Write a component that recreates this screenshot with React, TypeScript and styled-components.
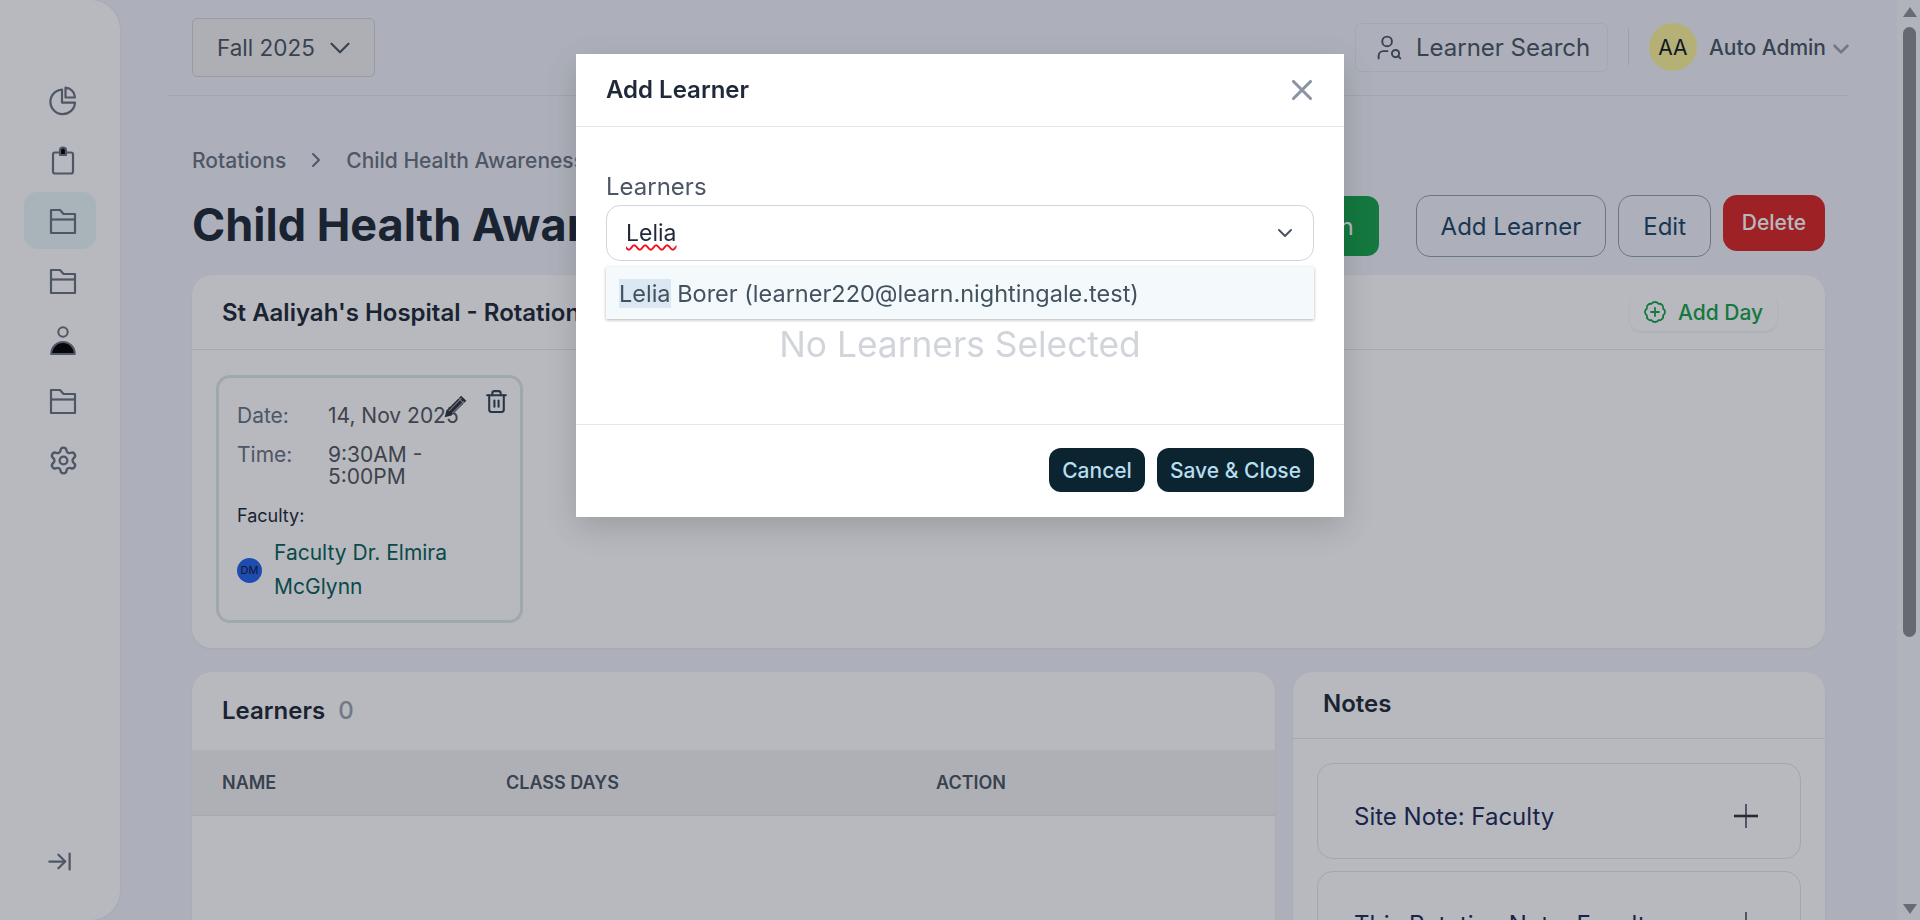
import React from "react";
import styled, { createGlobalStyle } from "styled-components";
import { ArrowRightToLine, BadgePlus, ChevronDown, ChevronRight, Settings, Trash2, UserSearch, X } from "lucide-react";

const GlobalStyle = createGlobalStyle`
  html, body {
    margin: 0;
    padding: 0;
    height: 100%;
    overflow: hidden;
  }
  body {
    font-family: Inter, "Liberation Sans", sans-serif;
    background: #f1f3f9;
    color: #1f2937;
  }
  * {
    box-sizing: border-box;
  }
`;

const Shell = styled.div`
  display: flex;
  width: 1920px;
  height: 920px;
  overflow: hidden;
  background: #f1f3f9;
`;

const Sidebar = styled.aside`
  flex: 0 0 120px;
  display: flex;
  flex-direction: column;
  align-items: flex-start;
  padding: 72px 0 0 24px;
  background: #ffffff;
  border-radius: 0 30px 30px 0;
  box-shadow: 0 0 4px rgba(0, 0, 0, 0.06);
`;

const NavItem = styled.div<{ $active?: boolean }>`
  width: 72px;
  height: 57px;
  margin-bottom: 3px;
  display: flex;
  align-items: center;
  justify-content: center;
  padding-left: 6px;
  color: #6b7280;
  border-radius: 14px;
  background: ${(p) => (p.$active ? "#eaf6fa" : "transparent")};
`;

const CollapseBtn = styled.div`
  margin-top: auto;
  margin-bottom: 45px;
  margin-left: 22px;
  color: #6b7280;
  display: flex;
`;

const Main = styled.main`
  flex: 1;
  min-width: 0;
  padding: 0 48px;
  height: 920px;
  overflow: hidden;
`;

const TopBar = styled.header`
  height: 96px;
  display: flex;
  align-items: center;
  justify-content: space-between;
  padding-left: 24px;
  padding-bottom: 1px;
  border-bottom: 1px solid #e2e5ec;
`;

const TermSelect = styled.div`
  width: 183px;
  height: 59px;
  display: flex;
  align-items: center;
  gap: 8px;
  padding-left: 24px;
  font-size: 22.5px;
  color: #4b5563;
  background: #f3f1f2;
  border: 1px solid #d1d5db;
  border-radius: 5px;
  margin-top: 1px;
`;

const TopRight = styled.div`
  display: flex;
  align-items: center;
`;

const SearchBtn = styled.div`
  width: 253px;
  height: 49px;
  display: flex;
  align-items: center;
  gap: 12px;
  padding-left: 19px;
  font-size: 24px;
  color: #4b5563;
  border: 1px solid #e5e7eb;
  border-radius: 6px;
`;

const VDivider = styled.span`
  width: 1px;
  height: 36px;
  margin: 0 20px;
  background: #d9dce3;
`;

const Avatar = styled.div`
  width: 48px;
  height: 48px;
  border-radius: 50%;
  display: flex;
  align-items: center;
  justify-content: center;
  font-size: 21px;
  color: #111827;
  background: #fdf298;
`;

const UserName = styled.span`
  margin-left: 12px;
  font-size: 21px;
  font-weight: 500;
  color: #4b5563;
`;

const UserCaret = styled.span`
  display: flex;
  margin: 4px -5px 0 2px;
  color: #9ca3af;
`;

const Content = styled.div`
  padding: 0 24px;
`;

const Breadcrumbs = styled.nav`
  display: flex;
  align-items: center;
  height: 28px;
  margin-top: 50px;
  font-size: 21px;
  font-weight: 500;
  color: #6b7280;
`;

const CrumbSep = styled.span`
  display: flex;
  margin: 0 18px;
  color: #6b7280;
`;

const TitleRow = styled.div`
  display: flex;
  align-items: flex-start;
  justify-content: space-between;
  margin-top: 21px;
`;

const PageTitle = styled.h1`
  margin: 0;
  font-size: 45px;
  line-height: 60px;
  font-weight: 700;
  color: #1f2937;
  white-space: nowrap;
`;

const Actions = styled.div`
  display: flex;
  align-items: flex-start;
  gap: 12px;
`;

const OutlineBtn = styled.div`
  height: 62px;
  padding: 0 24px;
  display: flex;
  align-items: center;
  font-size: 24px;
  color: #1e4566;
  border: 1px solid #8fa3a8;
  border-radius: 14px;
  white-space: nowrap;
`;

const GreenBtn = styled.div`
  height: 60px;
  margin: 1px 25px 0 0;
  padding: 0 25px;
  display: flex;
  align-items: center;
  font-size: 24px;
  color: #ffffff;
  background: #16a34a;
  border-radius: 12px;
  white-space: nowrap;
`;

const DeleteBtn = styled.div`
  width: 102px;
  height: 56px;
  display: flex;
  align-items: center;
  justify-content: center;
  padding-bottom: 2px;
  font-size: 21px;
  font-weight: 500;
  color: #ffffff;
  background: #dc2626;
  border-radius: 14px;
`;

const Card = styled.section`
  background: #ffffff;
  border-radius: 20px;
  box-shadow: 0 1px 3px rgba(0, 0, 0, 0.06);
  overflow: hidden;
`;

const RotationCard = styled(Card)`
  height: 373px;
  margin-top: 18px;
`;

const CardHeader = styled.div`
  height: 75px;
  display: flex;
  align-items: center;
  justify-content: space-between;
  padding: 0 48px 0 30px;
  border-bottom: 1px solid #e5e7eb;
`;

const CardTitle = styled.h2`
  margin: 0;
  font-size: 24px;
  font-weight: 600;
  color: #1f2937;
  white-space: nowrap;
`;

const AddDayBtn = styled.div`
  width: 147px;
  height: 37px;
  display: flex;
  align-items: center;
  gap: 11px;
  padding-left: 13px;
  font-size: 21px;
  font-weight: 500;
  color: #16a34a;
  white-space: nowrap;
  border-radius: 12px;
  box-shadow: 0 1px 3px rgba(0, 0, 0, 0.08);
`;

const DayCard = styled.div`
  position: relative;
  width: 307px;
  height: 248px;
  margin: 25px 0 0 24px;
  padding: 27px 18px 0;
  border: 3px solid #dde7e8;
  border-radius: 14px;
`;

const InfoRow = styled.div`
  display: grid;
  grid-template-columns: 91px 140px;
  font-size: 21px;
  line-height: 22px;
  margin-bottom: 17px;
  color: #6b7280;
`;

const InfoValue = styled.span`
  color: #52565e;
`;

const FacultyLabel = styled.div`
  margin-top: 17px;
  font-size: 18px;
  line-height: 22px;
  color: #1f2937;
`;

const FacultyRow = styled.div`
  display: flex;
  align-items: center;
  gap: 12px;
  margin-top: 9px;
  font-size: 21px;
  line-height: 34px;
  color: #096059;
`;

const FacultyAvatar = styled.span`
  flex: 0 0 25px;
  height: 25px;
  border-radius: 50%;
  display: flex;
  align-items: center;
  justify-content: center;
  font-size: 11px;
  color: #111827;
  background: #2563eb;
`;

const PencilIcon = styled.span`
  position: absolute;
  top: 16px;
  left: 224px;
  display: flex;
`;

const TrashIcon = styled.span`
  position: absolute;
  top: 11px;
  left: 265px;
  display: flex;
  color: #374151;
`;

const BottomRow = styled.div`
  display: grid;
  grid-template-columns: 1083px 532px;
  gap: 18px;
  margin-top: 24px;
`;

const LearnersCard = styled(Card)`
  height: 300px;
  border-radius: 20px 20px 0 0;
`;

const LearnersHead = styled.div`
  height: 78px;
  display: flex;
  align-items: center;
  gap: 13px;
  padding: 0 0 1px 30px;
`;

const CountLabel = styled.span`
  font-size: 24px;
  font-weight: 500;
  color: #9ca3af;
`;

const TableHead = styled.div`
  height: 66px;
  display: grid;
  grid-template-columns: 284px 430px 1fr;
  align-items: center;
  padding-left: 30px;
  font-size: 18px;
  font-weight: 600;
  color: #4b5563;
  text-transform: uppercase;
  background: #f4f3f2;
  border-bottom: 1px solid #e9e9e9;
`;

const NotesCard = styled(Card)`
  height: 300px;
  border-radius: 20px 20px 0 0;
`;

const NotesHead = styled.div`
  height: 67px;
  display: flex;
  align-items: center;
  padding: 0 30px 3px;
  border-bottom: 1px solid #e5e7eb;
`;

const NotesList = styled.div`
  display: flex;
  flex-direction: column;
  gap: 12px;
  padding: 24px 24px 0;
`;

const NoteItem = styled.div`
  height: 96px;
  flex-shrink: 0;
  display: flex;
  align-items: center;
  justify-content: space-between;
  padding: 10px 42px 0 36px;
  font-size: 24px;
  color: #1e2a5a;
  white-space: nowrap;
  border: 1px solid #e2e4ee;
  border-radius: 16px;
`;

const ScrollRail = styled.div`
  flex: 0 0 23px;
  height: 920px;
  display: flex;
  flex-direction: column;
  align-items: center;
  background: #f5f6fa;
  padding-left: 2px;
`;

const RailArrow = styled.span<{ $down?: boolean }>`
  width: 0;
  height: 0;
  margin-top: ${(p) => (p.$down ? "auto" : "7px")};
  margin-bottom: ${(p) => (p.$down ? "6px" : "0")};
  border-left: 7px solid transparent;
  border-right: 7px solid transparent;
  border-${(p) => (p.$down ? "top" : "bottom")}: 10px solid #8f9096;
`;

const RailThumb = styled.div`
  width: 13px;
  height: 610px;
  margin-top: 10px;
  border-radius: 7px;
  background: #8c8d93;
`;

const Overlay = styled.div`
  position: fixed;
  inset: 0;
  display: flex;
  justify-content: center;
  align-items: flex-start;
  padding-top: 54px;
  background: rgba(17, 24, 39, 0.3);
`;

const Modal = styled.div`
  width: 768px;
  height: 463px;
  display: flex;
  flex-direction: column;
  background: #ffffff;
  box-shadow: 0 10px 30px rgba(0, 0, 0, 0.16);
`;

const ModalHeader = styled.div`
  height: 73px;
  flex-shrink: 0;
  display: flex;
  align-items: center;
  justify-content: space-between;
  padding: 0 25px 1px 30px;
  border-bottom: 1px solid #e5e7eb;
`;

const ModalTitle = styled.h3`
  margin: 0;
  font-size: 24px;
  font-weight: 600;
  color: #1f2937;
`;

const CloseBtn = styled.span`
  display: flex;
  color: #8a94a3;
`;

const ModalBody = styled.div`
  position: relative;
  flex: 1;
  padding: 45px 30px 0;
`;

const FieldLabel = styled.label`
  display: block;
  font-size: 24px;
  line-height: 30px;
  color: #4b5563;
`;

const SelectBox = styled.div`
  height: 56px;
  margin-top: 3px;
  display: flex;
  align-items: center;
  justify-content: space-between;
  padding: 0 16px 0 19px;
  border: 1px solid #d1d5db;
  border-radius: 14px;
  color: #4b5563;
`;

const TypedText = styled.span`
  font-size: 23px;
  color: #1f2937;
  text-decoration: underline wavy #f0101e 1.6px;
  text-underline-offset: 3px;
`;

const Menu = styled.div`
  position: absolute;
  top: 140px;
  left: 30px;
  right: 30px;
  height: 52px;
  display: flex;
  align-items: center;
  padding-left: 13px;
  font-size: 23.5px;
  color: #43525f;
  background: #f4f9fc;
  box-shadow: 0 1px 3px rgba(0, 0, 0, 0.3);
`;

const Match = styled.mark`
  color: inherit;
  background: #dbe7f3;
`;

const EmptyText = styled.div`
  margin-top: 62px;
  text-align: center;
  font-size: 35.3px;
  line-height: 44px;
  color: #d1d5db;
`;

const ModalFooter = styled.div`
  height: 93px;
  flex-shrink: 0;
  display: flex;
  justify-content: flex-end;
  gap: 12px;
  padding: 23px 30px 0;
  border-top: 1px solid #e5e7eb;
`;

const DarkBtn = styled.div`
  height: 44px;
  padding: 0 13px;
  display: flex;
  align-items: center;
  font-size: 21px;
  font-weight: 500;
  color: #b5deef;
  background: #0c2330;
  border-radius: 12px;
`;

const PieIcon = () => (
  <svg width="30" height="30" viewBox="0 0 30 30" fill="none" stroke="currentColor" strokeWidth="2.2" strokeLinejoin="round">
    <path d="M14 3.6a12.3 12.3 0 1 0 13 13H14z" />
    <path d="M17.5 1.7a10 10 0 0 1 9.5 9.8h-9.5z" />
  </svg>
);

const ClipIcon = () => (
  <svg width="30" height="30" viewBox="0 0 30 30" fill="none" stroke="currentColor" strokeWidth="2.2" strokeLinejoin="round">
    <rect x="5" y="6.5" width="20" height="21" rx="2" />
    <path d="M12 9V4.5a3 3 0 0 1 6 0V9z" fill="#000" />
  </svg>
);

const FolderIcon = () => (
  <svg width="28" height="28" viewBox="0 0 28 28" fill="none" stroke="currentColor" strokeWidth="2.2" strokeLinejoin="round">
    <path d="M2 3h9l3.5 4H26v19H2z" />
    <path d="M2 12.5h24" />
  </svg>
);

const PersonIcon = () => (
  <svg width="26" height="29" viewBox="0 0 26 29" fill="none" stroke="currentColor" strokeWidth="2">
    <circle cx="13" cy="6" r="4.7" />
    <path d="M1.2 28a11.8 12 0 0 1 23.6 0z" fill="#000" strokeLinejoin="round" />
  </svg>
);

const PencilGlyph = () => (
  <svg width="25" height="25" viewBox="0 0 22 22" fill="none">
    <path d="M16 1.5l4.5 4.5L7.5 19 1.5 20.5 3 14.5z" fill="#2f343c" />
    <path d="M5 15L16.5 3.5M8 17L18.5 6.5M13.5 3.5L18.5 8.5" stroke="#ffffff" strokeOpacity="0.55" strokeWidth="0.9" />
  </svg>
);

const NotePlus = () => (
  <svg width="24" height="24" viewBox="0 0 24 24" fill="none">
    <path d="M12 0v24" stroke="#6b7280" strokeWidth="2" />
    <path d="M0 12h24" stroke="#2f343c" strokeWidth="2.6" />
  </svg>
);

export default function App() {
  return (
    <>
      <GlobalStyle />
      <Shell>
        <Sidebar>
          <NavItem><PieIcon /></NavItem>
          <NavItem><ClipIcon /></NavItem>
          <NavItem $active><FolderIcon /></NavItem>
          <NavItem><FolderIcon /></NavItem>
          <NavItem><PersonIcon /></NavItem>
          <NavItem><FolderIcon /></NavItem>
          <NavItem><Settings size={31} strokeWidth={1.8} /></NavItem>
          <CollapseBtn><ArrowRightToLine size={27} strokeWidth={2} /></CollapseBtn>
        </Sidebar>

        <Main>
          <TopBar>
            <TermSelect>
              Fall 2025
              <ChevronDown size={34} strokeWidth={1.5} />
            </TermSelect>
            <TopRight>
              <SearchBtn>
                <UserSearch size={29} strokeWidth={1.6} />
                Learner Search
              </SearchBtn>
              <VDivider />
              <Avatar>AA</Avatar>
              <UserName>Auto Admin</UserName>
              <UserCaret><ChevronDown size={26} strokeWidth={2.4} /></UserCaret>
            </TopRight>
          </TopBar>

          <Content>
            <Breadcrumbs>
              Rotations
              <CrumbSep><ChevronRight size={24} strokeWidth={2} /></CrumbSep>
              Child Health Awareness
            </Breadcrumbs>

            <TitleRow>
              <PageTitle>Child Health Awareness</PageTitle>
              <Actions>
                <GreenBtn>Complete Rotation</GreenBtn>
                <OutlineBtn>Add Learner</OutlineBtn>
                <OutlineBtn>Edit</OutlineBtn>
                <DeleteBtn>Delete</DeleteBtn>
              </Actions>
            </TitleRow>

            <RotationCard>
              <CardHeader>
                <CardTitle>St Aaliyah's Hospital - Rotation</CardTitle>
                <AddDayBtn>
                  <BadgePlus size={24} strokeWidth={1.8} />
                  Add Day
                </AddDayBtn>
              </CardHeader>
              <DayCard>
                <PencilIcon><PencilGlyph /></PencilIcon>
                <TrashIcon><Trash2 size={25} strokeWidth={2} /></TrashIcon>
                <InfoRow>
                  Date:
                  <InfoValue>14, Nov 2025</InfoValue>
                </InfoRow>
                <InfoRow>
                  Time:
                  <InfoValue>9:30AM - 5:00PM</InfoValue>
                </InfoRow>
                <FacultyLabel>Faculty:</FacultyLabel>
                <FacultyRow>
                  <FacultyAvatar>DM</FacultyAvatar>
                  <span>Faculty Dr. Elmira McGlynn</span>
                </FacultyRow>
              </DayCard>
            </RotationCard>

            <BottomRow>
              <LearnersCard>
                <LearnersHead>
                  <CardTitle>Learners</CardTitle>
                  <CountLabel>0</CountLabel>
                </LearnersHead>
                <TableHead>
                  <span>Name</span>
                  <span>Class Days</span>
                  <span>Action</span>
                </TableHead>
              </LearnersCard>
              <NotesCard>
                <NotesHead>
                  <CardTitle>Notes</CardTitle>
                </NotesHead>
                <NotesList>
                  <NoteItem>
                    Site Note: Faculty
                    <NotePlus />
                  </NoteItem>
                  <NoteItem>
                    This Rotation Note: Faculty
                    <NotePlus />
                  </NoteItem>
                </NotesList>
              </NotesCard>
            </BottomRow>
          </Content>
        </Main>

        <ScrollRail>
          <RailArrow />
          <RailThumb />
          <RailArrow $down />
        </ScrollRail>
      </Shell>

      <Overlay>
        <Modal>
          <ModalHeader>
            <ModalTitle>Add Learner</ModalTitle>
            <CloseBtn><X size={34} strokeWidth={2.2} /></CloseBtn>
          </ModalHeader>
          <ModalBody>
            <FieldLabel>Learners</FieldLabel>
            <SelectBox>
              <TypedText>Lelia</TypedText>
              <ChevronDown size={24} strokeWidth={2} />
            </SelectBox>
            <Menu>
              <span>
                <Match>Lelia</Match> Borer (learner220@learn.nightingale.test)
              </span>
            </Menu>
            <EmptyText>No Learners Selected</EmptyText>
          </ModalBody>
          <ModalFooter>
            <DarkBtn>Cancel</DarkBtn>
            <DarkBtn>Save &amp; Close</DarkBtn>
          </ModalFooter>
        </Modal>
      </Overlay>
    </>
  );
}
